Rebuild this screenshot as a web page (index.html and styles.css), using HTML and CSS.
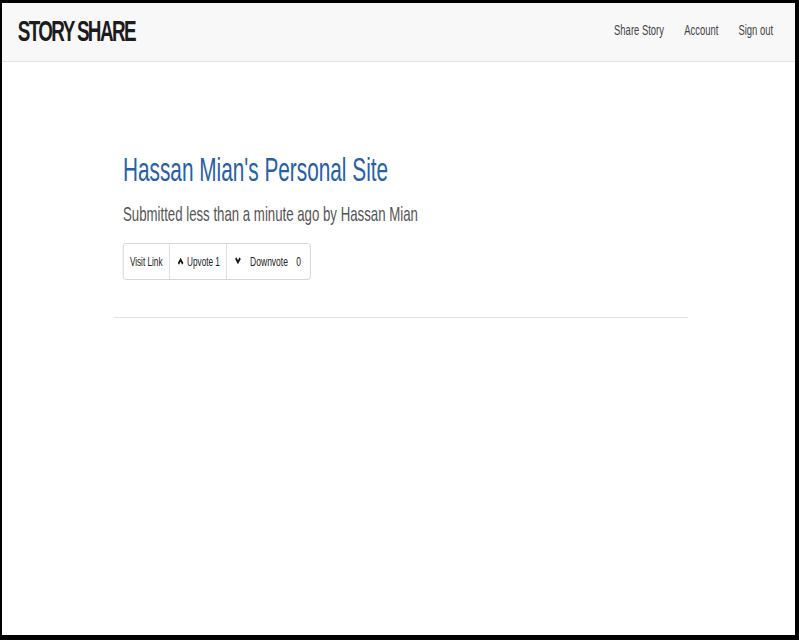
FILE: index.html
```html
<!DOCTYPE html>
<html>
<head>
<meta charset="utf-8">
<title>Story Share</title>
<link rel="stylesheet" href="styles.css">
</head>
<body>
<div class="frame">
  <div class="page">
    <header class="navbar">
      <a class="brand" href="#">STORY SHARE</a>
      <nav class="nav">
        <a href="#">Share Story</a>
        <a href="#">Account</a>
        <a href="#">Sign out</a>
      </nav>
    </header>
    <main class="container">
      <div class="story">
        <h1 class="title"><a href="#">Hassan Mian's Personal Site</a></h1>
        <p class="meta">Submitted less than a minute ago by Hassan Mian</p>
        <div class="btn-group">
          <a class="btn btn-visit" href="#">Visit Link</a>
          <a class="btn btn-up" href="#"><svg class="chev" viewBox="0 0 11 8" width="11" height="7"><polyline points="1.5,6.8 5.5,2 9.5,6.8" fill="none" stroke="#1a1a1a" stroke-width="3"/></svg><span>Upvote 1</span></a>
          <a class="btn btn-down" href="#"><svg class="chev" viewBox="0 0 11 8" width="11" height="7"><polyline points="1.5,1.2 5.5,6 9.5,1.2" fill="none" stroke="#1a1a1a" stroke-width="3"/></svg><span class="down-label">Downvote</span><span>0</span></a>
        </div>
      </div>
      <hr class="rule">
    </main>
  </div>
</div>
</body>
</html>
```
FILE: styles.css
```css
html, body {
  margin: 0;
  padding: 0;
  background: #000;
}
.frame {
  box-sizing: border-box;
  width: 799px;
  height: 640px;
  border-style: solid;
  border-color: #000;
  border-width: 3px 4px 5px 2px;
  background: #fff;
  overflow: hidden;
  font-family: "Liberation Sans", Arial, sans-serif;
  color: #333;
}
/* the reference is horizontally condensed; layout is done in wide units and squeezed */
.page {
  width: 1259px;
  transform: scaleX(0.63);
  transform-origin: 0 0;
}
.navbar {
  box-sizing: border-box;
  height: 59px;
  background: #f8f8f8;
  border-bottom: 1px solid #e4e4e4;
  display: flex;
  align-items: center;
  justify-content: space-between;
  padding: 0 35px 5px 25px;
}
.brand {
  font-size: 30px;
  font-weight: bold;
  color: #1c1c1c;
  text-decoration: none;
  letter-spacing: -2.6px;
  margin-top: 2px;
}
.nav {
  display: flex;
  gap: 32px;
}
.nav a {
  font-size: 15px;
  color: #444;
  text-decoration: none;
}
.container {
  width: 911px;
  margin-left: 178px;
}
.story {
  padding: 90px 14px 0;
}
.title {
  margin: 0;
  font-size: 33px;
  line-height: 36px;
  font-weight: normal;
}
.title a {
  color: #2760a6;
  text-decoration: none;
}
.meta {
  margin: 13px 0 0;
  font-size: 21px;
  line-height: 26px;
  color: #555;
}
.btn-group {
  display: inline-flex;
  margin-top: 16px;
  border: 1px solid #ccc;
  border-radius: 4px;
  height: 35px;
  background: #fff;
}
.btn {
  display: flex;
  align-items: center;
  font-size: 13px;
  color: #222;
  text-decoration: none;
}
.btn + .btn {
  border-left: 1.6px solid #ccc;
}
.chev {
  display: block;
}
.btn-visit {
  padding: 0 10px;
}
.btn-up {
  padding: 0 10px 0 12px;
  gap: 5px;
}
.btn-down {
  padding: 0 15px 0 12px;
  gap: 0;
  font-size: 13.5px;
}
.btn-down .chev {
  margin-right: 14px;
  margin-top: -3px;
}
.down-label {
  margin-right: 13px;
}
.rule {
  margin: 37px 0 0;
  border: 0;
  border-top: 1px solid #e2e2e2;
}
```
